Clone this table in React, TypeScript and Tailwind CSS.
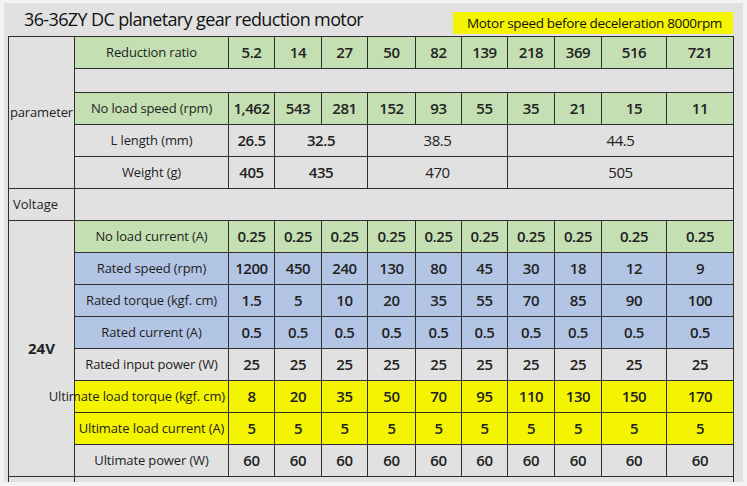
import React from 'react'

const FONT = { fontFamily: '"Open Sans", "Noto Sans", sans-serif' }

type Bg = 'green' | 'blue' | 'yellow' | 'gray'

const bgClass: Record<Bg, string> = {
  green: 'bg-[#c4dfb2]',
  blue: 'bg-[#b3c5e5]',
  yellow: 'bg-[#f4f400]',
  gray: 'bg-[#e1e1e1]',
}

interface Row {
  label: string
  bg: Bg
  values: (string | [string, number])[]
  labelRight?: boolean
}

const topRows: Row[] = [
  { label: 'Reduction ratio', bg: 'green', values: ['5.2', '14', '27', '50', '82', '139', '218', '369', '516', '721'] },
]

const speedRow: Row = {
  label: 'No load speed (rpm)',
  bg: 'green',
  values: ['1,462', '543', '281', '152', '93', '55', '35', '21', '15', '11'],
}

const sizeRows: Row[] = [
  { label: 'L length (mm)', bg: 'gray', values: ['26.5', ['32.5', 2], ['38.5', 3], ['44.5', 4]] },
  { label: 'Weight (g)', bg: 'gray', values: ['405', ['435', 2], ['470', 3], ['505', 4]] },
]

const voltRows: Row[] = [
  { label: 'No load current (A)', bg: 'green', values: Array(10).fill('0.25') },
  { label: 'Rated speed (rpm)', bg: 'blue', values: ['1200', '450', '240', '130', '80', '45', '30', '18', '12', '9'] },
  { label: 'Rated torque (kgf. cm)', bg: 'blue', values: ['1.5', '5', '10', '20', '35', '55', '70', '85', '90', '100'] },
  { label: 'Rated current (A)', bg: 'blue', values: Array(10).fill('0.5') },
  { label: 'Rated input power (W)', bg: 'gray', values: Array(10).fill('25') },
  { label: 'Ultimate load torque (kgf. cm)', bg: 'yellow', labelRight: true, values: ['8', '20', '35', '50', '70', '95', '110', '130', '150', '170'] },
  { label: 'Ultimate load current (A)', bg: 'yellow', values: Array(10).fill('5') },
  { label: 'Ultimate power (W)', bg: 'gray', values: Array(10).fill('60') },
]

const spanClass: Record<number, string> = {
  1: '',
  2: 'col-span-2',
  3: 'col-span-3',
  4: 'col-span-4',
}

function TableRow({ row }: { row: Row }) {
  const bg = bgClass[row.bg]
  return (
    <>
      <div
        className={`flex items-center whitespace-nowrap text-[13px] tracking-[-0.01em] text-[#1e1e1e] ${bg} ${
          row.labelRight ? 'justify-end pr-[3px]' : 'justify-center'
        }`}
      >
        {row.label}
      </div>
      {row.values.map((v, i) => {
        const [text, span] = Array.isArray(v) ? v : [v, 1]
        return (
          <div
            key={i}
            className={`flex items-center justify-center whitespace-nowrap text-[15px] tracking-[-0.03em] text-[#222] ${bg} ${spanClass[span]} ${
              span > 2 ? 'font-normal' : 'font-semibold'
            }`}
          >
            {text}
          </div>
        )
      })}
    </>
  )
}

export default function App() {
  return (
    <div className="min-h-screen bg-[#f3f3f3] pl-[4px] pt-[3px]" style={FONT}>
      <div className="h-[479px] w-[739px] overflow-hidden bg-[#e1e1e1]">
        <div className="flex h-[33px] items-start justify-between">
          <h1 className="ml-[20px] whitespace-nowrap text-[18px] leading-[33px] tracking-[-0.035em] text-[#111]">
            36-36ZY DC planetary gear reduction motor
          </h1>
          <div className="mr-[10px] mt-[9px] flex h-[22px] w-[280px] items-center justify-end whitespace-nowrap bg-[#f4f400] pr-[11px] text-[13.5px] tracking-[-0.025em] text-[#111]">
            Motor speed before deceleration 8000rpm
          </div>
        </div>

        <div className="ml-[4px] grid w-[726px] grid-cols-[65px_153px_45px_46px_45px_47px_45px_45px_46px_46px_64px_66px] grid-rows-[31px_23px_repeat(13,31px)] gap-px bg-[#2e2e2e] p-px">
          <div className="row-span-5 flex items-center justify-center bg-[#e1e1e1] text-[13px] tracking-[-0.01em] text-[#1e1e1e]">
            parameter
          </div>
          {topRows.map((r) => (
            <TableRow key={r.label} row={r} />
          ))}
          <div className="col-span-11 bg-[#e1e1e1]" />
          <TableRow row={speedRow} />
          {sizeRows.map((r) => (
            <TableRow key={r.label} row={r} />
          ))}

          <div className="flex items-center bg-[#e1e1e1] pl-[4px] text-[13px] text-[#1e1e1e]">Voltage</div>
          <div className="col-span-11 bg-[#e1e1e1]" />

          <div className="row-span-8 flex items-center justify-center bg-[#e1e1e1] text-[15px] font-bold text-[#222]">
            24V
          </div>
          {voltRows.map((r) => (
            <TableRow key={r.label} row={r} />
          ))}

          <div className="flex items-start bg-[#e1e1e1] pl-[4px] text-[13px] text-[#1e1e1e]">Note</div>
          <div className="col-span-11 bg-[#e1e1e1]" />
        </div>
      </div>
    </div>
  )
}
